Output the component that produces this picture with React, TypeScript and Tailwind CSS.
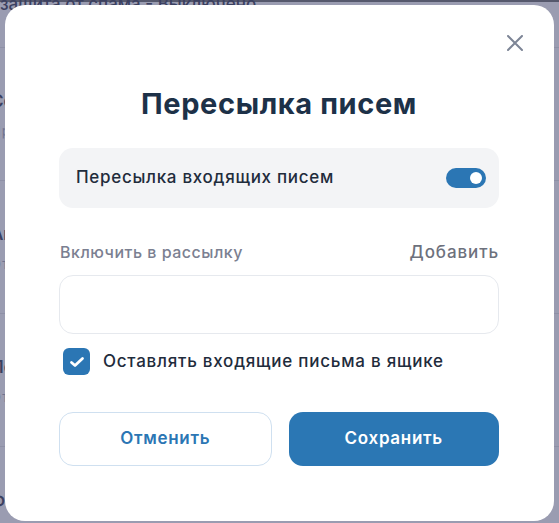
import { useState } from "react";

const rows = [
  { title: "Сортировка писем", sub: "Правила не заданы" },
  { title: "Автоответчик", sub: "Отключен" },
  { title: "Пересылка", sub: "Отключена, письма остаются в ящике" },
];

function BackgroundPage() {
  // the settings page behind the dimmed overlay, only its edges peek out
  return (
    <div className="flex flex-col text-[#3b4060] -ml-[9px]">
      <div className="h-[2px] bg-[#55586c] ml-[9px]" />
      <div className="h-[53px] -mt-[8px] pl-[9px] text-[17px] leading-[20px] font-medium whitespace-nowrap">
        защита от спама - Выключено
      </div>
      {rows.map((r) => (
        <div key={r.title} className="h-[133px] border-t border-[#8e90a6] pt-[42px] flex flex-col gap-[10px] whitespace-nowrap">
          <span className="text-[17px] leading-[22px] font-semibold">{r.title}</span>
          <span className="text-[13px] leading-[18px] text-[#6f7390] tracking-[1.2px]">{r.sub}</span>
        </div>
      ))}
      <div className="border-t border-[#8e90a6] pt-[42px] text-[17px] font-semibold">Фильтры</div>
    </div>
  );
}

function Toggle({ on, onChange }: { on: boolean; onChange: () => void }) {
  return (
    <button
      type="button"
      onClick={onChange}
      className={
        "flex items-center w-[40px] h-[20px] rounded-full px-[4px] " +
        (on ? "bg-[#2b76b4] justify-end" : "bg-[#c9ced8] justify-start")
      }
    >
      <span className="w-[12px] h-[12px] rounded-full bg-white" />
    </button>
  );
}

export default function App() {
  const [forward, setForward] = useState(true);
  const [keep, setKeep] = useState(true);

  return (
    <div className="relative w-[559px] h-[523px] overflow-hidden bg-[#9a9cb1] font-['Inter',sans-serif]">
      <BackgroundPage />

      <div className="absolute left-[5px] top-[5px] w-[549px] h-[516px] rounded-[20px] bg-white pt-[81px] pl-[54px] pr-[55px]">
        <button type="button" className="absolute right-[31px] top-[30px] text-[#7d8596]">
          <svg width="16" height="16" viewBox="0 0 16 16" fill="none" stroke="currentColor" strokeWidth="2" strokeLinecap="round">
            <path d="M1 1 L15 15 M15 1 L1 15" />
          </svg>
        </button>

        <h2 className="text-center text-[29px] leading-[36px] font-bold text-[#1d3148] tracking-[0.6px]">
          Пересылка писем
        </h2>

        <div className="mt-[26px] h-[60px] rounded-[14px] bg-[#f3f4f6] flex items-center justify-between pl-[17px] pr-[13px]">
          <span className="text-[17px] font-medium text-[#1f2c3c] tracking-[0.7px]">Пересылка входящих писем</span>
          <Toggle on={forward} onChange={() => setForward(!forward)} />
        </div>

        <div className="mt-[32px] flex items-center justify-between leading-[24px] font-medium">
          <span className="text-[16px] text-[#7b8091] pl-[1px] tracking-[0.5px]">Включить в рассылку</span>
          <button type="button" className="text-[#6d717d] text-[17px] tracking-[0.9px]">Добавить</button>
        </div>

        <input className="mt-[11px] block w-full h-[59px] rounded-[14px] border border-[#e6e9ee] px-4 outline-none text-[16px]" />

        <label className="mt-[14px] flex items-center gap-[13px] cursor-pointer">
          <span
            onClick={() => setKeep(!keep)}
            className={
              "ml-[4px] w-[27px] h-[27px] rounded-[6px] flex items-center justify-center " +
              (keep ? "bg-[#2b76b4]" : "border-2 border-[#c9ced8] bg-white")
            }
          >
            {keep && (
              <svg width="16" height="16" viewBox="0 0 16 16" fill="none" stroke="white" strokeWidth="2.8" strokeLinecap="round" strokeLinejoin="round">
                <path d="M2.5 8.5 L6 11.5 L13.5 4.5" />
              </svg>
            )}
          </span>
          <span className="text-[17px] font-medium text-[#1f2c3c] tracking-[0.75px]">Оставлять входящие письма в ящике</span>
        </label>

        <div className="mt-[37px] flex gap-[17px]">
          <button
            type="button"
            className="flex-1 h-[54px] rounded-[14px] border border-[#cfe0f0] text-[17px] font-semibold text-[#2b76b4] tracking-[0.7px]"
          >
            Отменить
          </button>
          <button
            type="button"
            className="flex-1 h-[54px] rounded-[14px] bg-[#2b77b4] text-[17px] font-semibold text-white tracking-[0.7px]"
          >
            Сохранить
          </button>
        </div>
      </div>
    </div>
  );
}
